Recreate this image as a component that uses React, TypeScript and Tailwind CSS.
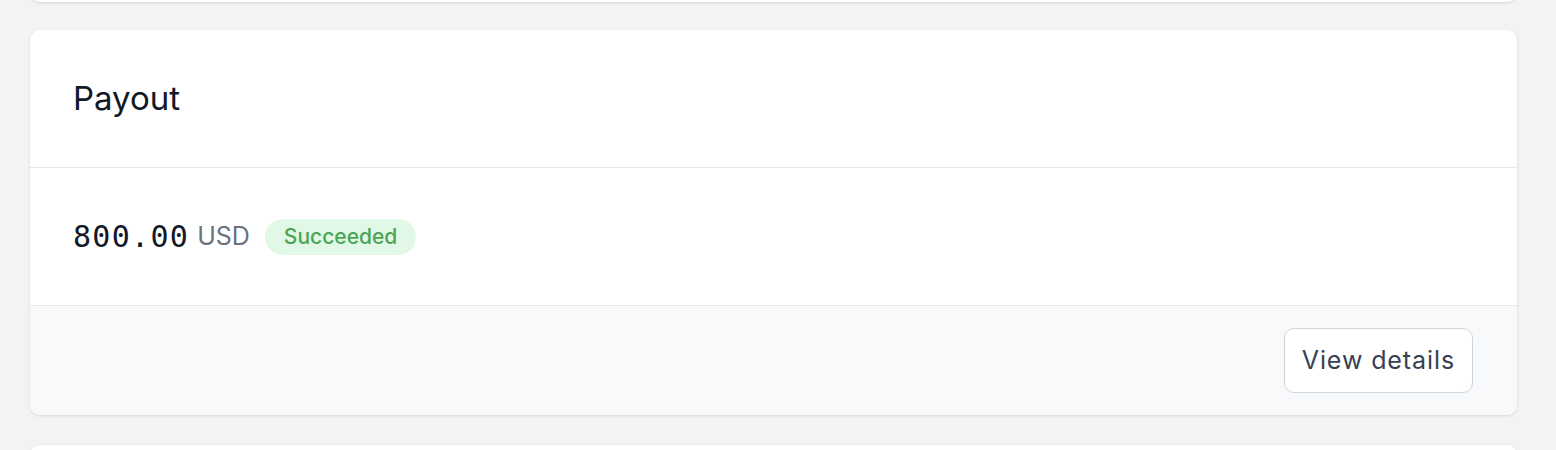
import React from "react";

const Card = ({ children, className = "" }: { children?: React.ReactNode; className?: string }) => (
  <div
    className={`bg-white rounded-[10px] shadow-[0_1px_3px_rgba(0,0,0,0.12)] overflow-hidden ${className}`}
  >
    {children}
  </div>
);

const App = () => {
  return (
    <div className="min-h-[450px] h-[450px] overflow-hidden bg-[#f3f3f3] pl-[30px] pr-[39px] font-['Inter',sans-serif]">
      <Card className="h-[40px] -mt-[38px]" />

      <Card className="mt-[28px]">
        <div className="h-[138px] flex items-center px-[43px] border-b border-[#e5e7eb]">
          <h2 className="text-[33px] text-[#111827] font-normal">Payout</h2>
        </div>

        <div className="h-[138px] flex items-center px-[43px] border-b border-[#e5e7eb]">
          <span className="font-['DejaVu_Sans_Mono',monospace] text-[30px] tracking-[1.3px] text-[#111827]">800.00</span>
          <span className="ml-[8px] text-[25px] text-[#6b7280]">USD</span>
          <span className="ml-[15px] h-[36px] px-[19px] flex items-center rounded-full bg-[#e2f8e6] text-[#4aa556] text-[21px] font-medium">
            Succeeded
          </span>
        </div>

        <div className="h-[109px] bg-[#f8f9fb] flex items-center justify-end px-[44px]">
          <button className="h-[65px] px-[17px] rounded-[10px] border border-[#d1d5db] bg-white text-[#374151] text-[25px] tracking-[0.9px]">
            View details
          </button>
        </div>
      </Card>

      <Card className="mt-[30px] h-[40px]" />
    </div>
  );
};

export default App;
